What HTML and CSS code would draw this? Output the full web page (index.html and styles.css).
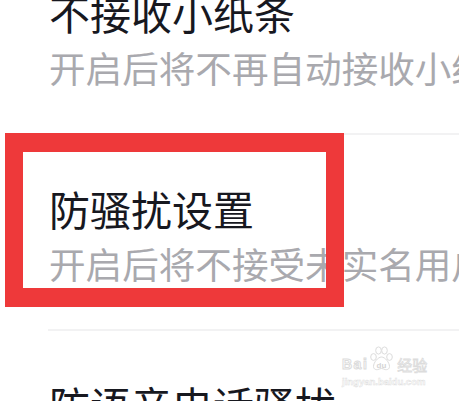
FILE: index.html
```html
<!DOCTYPE html>
<html lang="zh-CN">
<head>
    <meta charset="UTF-8">
    <meta name="viewport" content="width=device-width, initial-scale=1.0">
    <title>隐私设置</title>
    <link rel="stylesheet" href="styles.css">
</head>
<body>

    <div class="settings">
        <div class="item">
            <div class="item-body">
                <div class="item-title">不接收小纸条</div>
                <div class="item-desc">开启后将不再自动接收小纸条消息</div>
            </div>
        </div>
        <div class="item">
            <div class="item-body">
                <div class="item-title">防骚扰设置</div>
                <div class="item-desc">开启后将不接受未实名用户的消息</div>
            </div>
        </div>
        <div class="item">
            <div class="item-body">
                <div class="item-title">防语音电话骚扰</div>
                <div class="item-desc">开启后将不接受陌生人的语音电话</div>
            </div>
        </div>
    </div>

    <!-- annotation box drawn over the screenshot -->
    <div class="highlight"></div>

    <div class="watermark">
        <div class="wm-row">
            <span class="wm-bai">Bai</span>
            <svg class="wm-paw" width="25" height="26" viewBox="0 0 25 26">
                <g fill="#fff" stroke="#dcdcdc" stroke-width="1">
                    <ellipse cx="4.5" cy="11" rx="2.8" ry="3.4"/>
                    <ellipse cx="9.5" cy="4.5" rx="2.8" ry="3.6"/>
                    <ellipse cx="15.5" cy="4.5" rx="2.8" ry="3.6"/>
                    <ellipse cx="20.5" cy="11" rx="2.8" ry="3.4"/>
                    <path d="M12.5 11c-3.5 0-8 5.5-8 9.5 0 3 3 3.5 4.5 3 1.5-.5 2.3-1 3.5-1s2 .5 3.5 1c1.5.5 4.5 0 4.5-3 0-4-4.5-9.5-8-9.5z"/>
                </g>
                <text x="12.5" y="22" text-anchor="middle" class="wm-du">du</text>
            </svg>
            <span class="wm-jy">经验</span>
        </div>
        <div class="wm-url">jingyan.baidu.com</div>
    </div>

</body>
</html>
```

FILE: styles.css
```css
body {
    margin: 0;
    background: #fff;
    font-family: "Noto Sans CJK SC", "Noto Sans", sans-serif;
    overflow: hidden;
}
.settings {
    margin-top: -61px;
}
.item {
    padding-left: 48px;
}
.item-body {
    padding: 45px 0 40px;
    border-bottom: 2px solid #f2f2f3;
    white-space: nowrap;
    overflow: hidden;
}
.item-title {
    font-size: 41px;
    line-height: 56px;
    color: #17181f;
    padding-left: 1px;
}
.item-desc {
    margin-top: 3px;
    font-size: 36.6px;
    line-height: 50px;
    color: #a9a9ae;
    padding-left: 1px;
}
.highlight {
    position: absolute;
    left: 5px;
    top: 133px;
    width: 303px;
    height: 136px;
    border: 18px solid #ee393a;
    border-top-width: 19px;
    border-bottom-width: 19px;
}
.watermark {
    position: absolute;
    left: 342px;
    top: 346px;
    color: #fff;
}
.wm-row {
    display: flex;
    align-items: flex-end;
}
.wm-bai {
    font-family: "Liberation Sans", sans-serif;
    font-weight: bold;
    font-size: 14px;
    line-height: 14px;
    -webkit-text-stroke: 1px #dcdcdc;
    letter-spacing: 1.5px;
    margin-bottom: 1px;
}
.wm-paw {
    display: block;
    margin: 0 3px 0 1px;
}
.wm-du {
    font-family: "Liberation Sans", sans-serif;
    font-weight: bold;
    font-size: 8px;
    fill: #d4d4d4;
}
.wm-jy {
    font-size: 15px;
    line-height: 15px;
    -webkit-text-stroke: 0.8px #dcdcdc;
}
.wm-url {
    margin-top: 5px;
    font-family: "Liberation Sans", sans-serif;
    font-weight: bold;
    font-size: 9.5px;
    line-height: 10px;
    -webkit-text-stroke: 0.5px #e0e0e0;
}
```
